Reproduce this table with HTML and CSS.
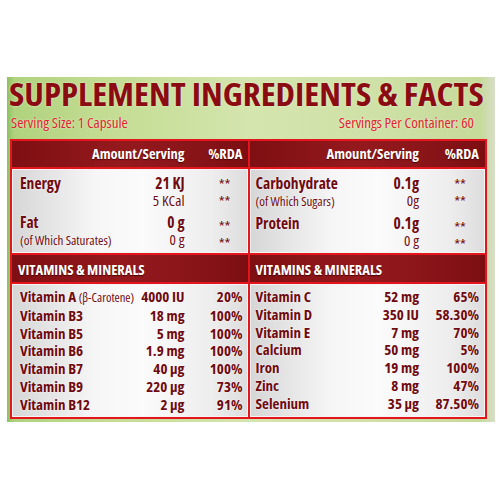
FILE: index.html
```html
<!DOCTYPE html>
<html>
<head>
<meta charset="utf-8">
<link rel="stylesheet" href="styles.css">
</head>
<body>
<div class="panel">
  <h1 class="title"><span class="title-text">SUPPLEMENT INGREDIENTS &amp; FACTS</span></h1>
  <div class="serving"><span>Serving Size: 1 Capsule</span><span>Servings Per Container: 60</span></div>
  <div class="facts">
    <div class="head l"><span></span><span class="amt">Amount/Serving</span><span class="rda">%RDA</span></div>
    <div class="head r"><span></span><span class="amt">Amount/Serving</span><span class="rda">%RDA</span></div>

    <div class="body macro l">
      <div class="row"><span class="name">Energy</span><span class="amt">21 KJ</span><span class="rda"><span class="ast">**</span></span></div>
      <div class="row"><span class="name"></span><span class="amt reg">5 KCal</span><span class="rda"><span class="ast">**</span></span></div>
      <div class="row gap"><span class="name">Fat</span><span class="amt">0 g</span><span class="rda"><span class="ast low">**</span></span></div>
      <div class="row"><span class="name sub">(of Which Saturates)</span><span class="amt reg">0 g</span><span class="rda"><span class="ast low">**</span></span></div>
    </div>
    <div class="body macro r">
      <div class="row"><span class="name">Carbohydrate</span><span class="amt">0.1g</span><span class="rda"><span class="ast">**</span></span></div>
      <div class="row"><span class="name sub">(of Which Sugars)</span><span class="amt reg">0g</span><span class="rda"><span class="ast">**</span></span></div>
      <div class="row gap"><span class="name">Protein</span><span class="amt">0.1g</span><span class="rda"><span class="ast low">**</span></span></div>
      <div class="row"><span class="name"></span><span class="amt reg">0 g</span><span class="rda"><span class="ast low">**</span></span></div>
    </div>

    <div class="sec l">VITAMINS &amp; MINERALS</div>
    <div class="sec r">VITAMINS &amp; MINERALS</div>

    <div class="body vit l">
      <div class="row"><span class="name">Vitamin A <span class="note">(β-Carotene)</span></span><span class="amt">4000 IU</span><span class="rda">20%</span></div>
      <div class="row"><span class="name">Vitamin B3</span><span class="amt">18 mg</span><span class="rda">100%</span></div>
      <div class="row"><span class="name">Vitamin B5</span><span class="amt">5 mg</span><span class="rda">100%</span></div>
      <div class="row"><span class="name">Vitamin B6</span><span class="amt">1.9 mg</span><span class="rda">100%</span></div>
      <div class="row"><span class="name">Vitamin B7</span><span class="amt">40 µg</span><span class="rda">100%</span></div>
      <div class="row"><span class="name">Vitamin B9</span><span class="amt">220 µg</span><span class="rda">73%</span></div>
      <div class="row"><span class="name">Vitamin B12</span><span class="amt">2 µg</span><span class="rda">91%</span></div>
    </div>
    <div class="body vit r">
      <div class="row"><span class="name">Vitamin C</span><span class="amt">52 mg</span><span class="rda">65%</span></div>
      <div class="row"><span class="name">Vitamin D</span><span class="amt">350 IU</span><span class="rda">58.30%</span></div>
      <div class="row"><span class="name">Vitamin E</span><span class="amt">7 mg</span><span class="rda">70%</span></div>
      <div class="row"><span class="name">Calcium</span><span class="amt">50 mg</span><span class="rda">5%</span></div>
      <div class="row"><span class="name">Iron</span><span class="amt">19 mg</span><span class="rda">100%</span></div>
      <div class="row"><span class="name">Zinc</span><span class="amt">8 mg</span><span class="rda">47%</span></div>
      <div class="row"><span class="name">Selenium</span><span class="amt">35 µg</span><span class="rda">87.50%</span></div>
    </div>
  </div>
</div>
</body>
</html>
```
FILE: styles.css
```css
html, body {
  margin: 0;
  padding: 0;
  background: #ffffff;
}
body {
  font-family: "Open Sans", "Liberation Sans", sans-serif;
  font-stretch: 80%;
}
.panel {
  margin: 77px 0 0 7px;
  width: 488px;
  height: 345px;
  box-sizing: border-box;
  padding: 1px 8px 0 2px;
  background: linear-gradient(to right, #8cc060 0, #b0d27e 1.5%, #c3dc92 20%, #d4e5ae 50%, #cfe1a6 75%, #c6da9a 97%, #d8dec8 100%);
}
.title {
  margin: 0;
  font-size: 32px;
  line-height: 32px;
  font-weight: 700;
  color: #8a0c12;
  white-space: nowrap;
}
.title-text {
  display: inline-block;
  transform: scaleX(1.09);
  transform-origin: left center;
  text-shadow: 0 0 2px #eef5d6;
}
.serving {
  display: flex;
  justify-content: space-between;
  margin: 4px 13px 0 2px;
  font-size: 15px;
  line-height: 17px;
  color: #e0242c;
  text-shadow: 0 0 2px #f3f8e4;
}
.facts {
  margin: 8px 0 0 1px;
  width: 477px;
  box-sizing: border-box;
  display: grid;
  grid-template-columns: 1fr 1fr;
  grid-template-rows: 26px 84px 27px 133px;
  gap: 2px;
  padding: 2px;
  background: #e3161e;
}
.head, .row {
  display: grid;
  align-items: baseline;
}
.l.head, .l .row {
  grid-template-columns: 1fr auto 58px;
}
.r.head, .r .row {
  grid-template-columns: 1fr auto 60px;
}
.l.head, .l.body {
  padding-left: 8px;
  padding-right: 5px;
}
.r.head, .r.body {
  padding-left: 6px;
  padding-right: 6px;
}
.head, .sec {
  background: linear-gradient(to right, #7e0f12 0, #94191d 45%, #8c161a 70%, #7c0e12 100%);
  color: #ffffff;
  font-weight: 700;
  text-shadow: 0 1px 1px #4a0000;
}
.head {
  font-size: 14.5px;
  line-height: 26px;
}
.amt {
  text-align: right;
}
.rda {
  text-align: right;
}
.sec {
  font-size: 14.5px;
  line-height: 27px;
  padding: 1px 0 0 6px;
  box-sizing: border-box;
}
.body {
  background: linear-gradient(to right, #d6d6d6 0, #f6f6f6 35%, #fbfbfb 55%, #ededed 85%, #dcdcdc 100%);
  color: #6e0a10;
  font-weight: 700;
  text-shadow: 0 0 2px #ffffff;
  box-shadow: inset 0 0 0 1px #f4f4f4;
}
.macro {
  padding-top: 6px;
  font-size: 15.5px;
}
.macro .row {
  line-height: 17px;
}
.macro .row.gap {
  margin-top: 5px;
}
.reg {
  font-weight: 400;
  font-size: 15px;
}
.sub {
  font-weight: 400;
  font-size: 13px;
}
.ast {
  display: inline-block;
  width: 36px;
  text-align: center;
  font-weight: 400;
  font-size: 15px;
  position: relative;
  top: 1px;
}
.r .ast {
  width: 38px;
}
.ast.low {
  top: 4px;
}
.vit {
  padding-top: 4px;
  font-size: 15px;
}
.vit .row {
  line-height: 17.8px;
}
.note {
  font-weight: 400;
  font-size: 12.5px;
}
```
